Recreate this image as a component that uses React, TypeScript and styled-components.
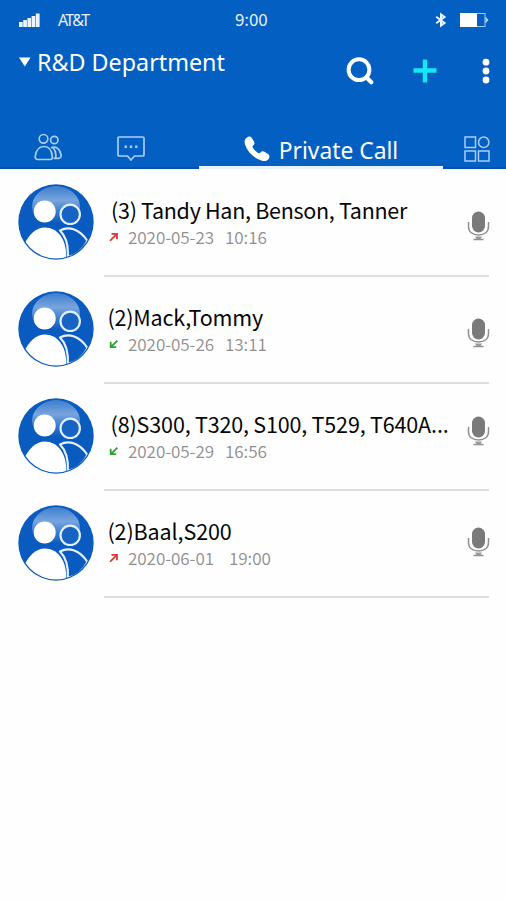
import React from "react";
import styled, { createGlobalStyle } from "styled-components";

const Global = createGlobalStyle`
  * { box-sizing: border-box; }
  body { margin: 0; background: #fefefe; }
`;

const cjk = `"Noto Sans CJK SC", "Noto Sans", sans-serif`;
const latin = `"Noto Sans", "Open Sans", sans-serif`;

const Screen = styled.div`
  width: 506px;
  height: 900px;
  background: #fefefe;
  overflow: hidden;
  font-family: ${cjk};
`;

const Header = styled.header`
  height: 169px;
  background: #035fc1;
  color: #fff;
  display: flex;
  flex-direction: column;
`;

const StatusBar = styled.div`
  height: 40px;
  padding: 0 17px 0 19px;
  display: grid;
  grid-template-columns: 216px auto 1fr;
  align-items: center;
`;

const StatusGroup = styled.div<{ $end?: boolean }>`
  display: flex;
  align-items: center;
  gap: ${(p) => (p.$end ? 12 : 17)}px;
  justify-content: ${(p) => (p.$end ? "flex-end" : "flex-start")};
`;

const Carrier = styled.span`
  font: 16px/20px ${latin};
  letter-spacing: -1.75px;
  color: #e6f1fd;
`;

const Clock = styled.time`
  margin-top: -2px;
  font: 17px/20px ${cjk};
  letter-spacing: -0.1px;
  color: #e6f1fd;
`;

const TitleBar = styled.div`
  height: 60px;
  padding: 0 16px 0 19px;
  display: flex;
  align-items: flex-start;
  justify-content: space-between;
`;

const Department = styled.h1`
  margin: 6px 0 0;
  display: flex;
  align-items: center;
  gap: 6px;
  font: 400 23.3px/32px ${latin};
  white-space: nowrap;
`;

const Actions = styled.div`
  display: flex;
  align-items: center;
  margin-top: 15px;
  height: 32px;
`;

const Action = styled.button<{ $gap?: number }>`
  padding: 0;
  border: 0;
  background: none;
  color: inherit;
  display: flex;
  margin-left: ${(p) => p.$gap ?? 0}px;
`;

const Tabs = styled.nav`
  flex: 1;
  display: grid;
  grid-template-columns: 96px 103px 244px 63px;
`;

const Tab = styled.div<{ $active?: boolean; $top: number; $pad?: number; $start?: boolean }>`
  display: flex;
  align-items: center;
  justify-content: ${(p) => (p.$start ? "flex-start" : "center")};
  gap: 9px;
  padding: ${(p) => p.$top}px 0 0 ${(p) => p.$pad ?? 0}px;
  border-bottom: ${(p) => (p.$active ? "3px solid #e9f1fc" : "2px solid #0350b2")};
  color: ${(p) => (p.$active ? "#fff" : "#a9cdf8")};
  font: 22.8px/32px ${latin};
  white-space: nowrap;
`;

const TabLabel = styled.span`
  padding-top: 4px;
  line-height: 28px;
`;

const List = styled.ul`
  list-style: none;
  margin: 1px 0 0;
  padding: 0;
`;

const Row = styled.li`
  height: 107px;
  padding: 0 17px 0 18px;
  display: flex;
`;

const AvatarBox = styled.div`
  width: 76px;
  margin: 14px 10px 0 0;
`;

const Details = styled.div`
  flex: 1;
  min-width: 0;
  display: flex;
  justify-content: space-between;
  border-bottom: 2px solid #dedede;
`;

const Name = styled.div<{ $indent: number; $spacing: number; $word: number }>`
  margin-top: 23px;
  padding-left: ${(p) => p.$indent}px;
  font: 400 21.5px/34px ${cjk};
  letter-spacing: ${(p) => p.$spacing}px;
  word-spacing: ${(p) => p.$word}px;
  color: #060606;
  white-space: nowrap;
`;

const Meta = styled.div<{ $gap: number }>`
  display: flex;
  align-items: center;
  padding-left: 5px;
  height: 19px;
  font: 350 17.1px/19px ${cjk};
  color: #909090;
  white-space: nowrap;
  time + time { margin-left: ${(p) => p.$gap}px; }
`;

const Stamp = styled.time<{ $lead?: boolean }>`
  margin: -1px 0 0 ${(p) => (p.$lead ? 10 : 0)}px;
  letter-spacing: -0.08px;
`;

const MicBox = styled.div<{ $top: number }>`
  margin: ${(p) => p.$top}px -1px 0 0;
  flex: none;
`;

const Signal = () => (
  <svg width="22" height="15" viewBox="0 0 22 15" fill="#eaf5ff">
    <rect x="0" y="9" width="3.7" height="5" />
    <rect x="4.2" y="7" width="3.7" height="7" />
    <rect x="8.4" y="5" width="3.7" height="9" />
    <rect x="12.6" y="3" width="3.7" height="11" />
    <rect x="16.8" y="0.5" width="3.8" height="13.5" />
  </svg>
);

const Bluetooth = () => (
  <svg width="12" height="16" viewBox="0 0 12 16" fill="none" stroke="#eaf5ff" strokeWidth="2">
    <path d="M1.2 4.7 9.5 11 6 13.5v-11L9.5 5l-8.3 6.3" />
  </svg>
);

const Battery = () => (
  <svg width="30" height="16" viewBox="0 0 30 16" fill="none">
    <rect x="1.5" y="1.5" width="24.5" height="13" stroke="#9cc8f5" />
    <rect x="1" y="1" width="17" height="14" fill="#fff" />
    <path d="M26.5 4.5 29.5 8l-3 3.5z" fill="#b5d5f8" />
  </svg>
);

const Caret = () => (
  <svg width="12" height="10" viewBox="0 0 12 10">
    <path d="M0 .5h11.5L5.8 9.5z" fill="#fff" />
  </svg>
);

const Search = () => (
  <svg width="28" height="28" viewBox="0 0 28 28" fill="none" stroke="#fff" strokeLinecap="round">
    <circle cx="13" cy="12.7" r="10.4" strokeWidth="4" />
    <path d="m20.5 20.5 4.8 4.8" strokeWidth="4.2" />
  </svg>
);

const Plus = () => (
  <svg width="24" height="24" viewBox="0 0 24 24" stroke="#12e9f5" strokeWidth="4.4">
    <path d="M12 .5v23M.5 11.5h23" />
  </svg>
);

const Dots = () => (
  <svg width="8" height="26" viewBox="0 0 8 26" fill="#fff">
    <circle cx="4" cy="4.2" r="3.4" />
    <circle cx="4" cy="13" r="3.4" />
    <circle cx="4" cy="22" r="3.4" />
  </svg>
);

const People = () => (
  <svg width="28" height="28" viewBox="0 0 28 28" fill="none" stroke="currentColor" strokeWidth="1.7">
    <circle cx="9.5" cy="5.8" r="4.3" />
    <circle cx="20.3" cy="7" r="3.7" />
    <path d="M4 26.5h12c1.8 0 2.5-1 2.3-3-.5-6.5-3.5-10-8.3-10s-8 3.5-8.8 10c-.2 2 1 3 2.8 3z" />
    <path d="M17 14.8c5-2 9.2 1.2 10 7.2.3 2.3-.6 3.3-2.8 3.3h-4.7M19 14.5c2.6 3 3.4 6.5 2.6 10.5" />
  </svg>
);

const Chat = () => (
  <svg width="28" height="26" viewBox="0 0 28 26" fill="none" stroke="currentColor" strokeWidth="1.7">
    <path d="M2 1h24q1 0 1 1v17q0 1-1 1h-8.5L14 24l-3.5-4H2q-1 0-1-1V2q0-1 1-1z" strokeLinejoin="round" />
    <path d="M7.5 10.8h2.4M12.8 10.8h2.4M18.1 10.8h2.4" strokeWidth="2.4" />
  </svg>
);

const Phone = () => (
  <svg width="26" height="26" viewBox="0 0 26 26" fill="#fff">
    <path d="M3.3 1.2C5 .2 6.9.4 8 2.2l2 3.4c.9 1.7.6 2.9-.8 4-.9.7-.9 1.4-.3 2.2 1.4 2.1 3 3.7 5.2 5.2.9.6 1.600.5 2.300-.4 1.100-1.400 2.400-1.700 4-.8l3.600 2.200c1.600 1 1.900 2.900.9 4.500-1.600 2.600-4.300 3.200-7.500 2.100C9.400 21.800 3.400 15.800 1 8.500.1 5.400.8 2.700 3.300 1.200z" />
  </svg>
);

const Grid = () => (
  <svg width="26" height="26" viewBox="0 0 26 26" fill="none" stroke="currentColor" strokeWidth="1.5">
    <rect x="1" y="1" width="10.5" height="10.5" />
    <circle cx="19.7" cy="6.3" r="5.2" />
    <rect x="1" y="15" width="10.5" height="10" />
    <rect x="14.5" y="15" width="10.5" height="10" />
  </svg>
);

const Avatar = () => (
  <svg width="76" height="76" viewBox="0 0 76 76">
    <defs>
      <linearGradient id="gloss" x1="0" y1="0" x2="0" y2="1">
        <stop offset="0" stopColor="#3d7dcd" />
        <stop offset="0.4" stopColor="#78a5de" />
        <stop offset="0.75" stopColor="#3377cc" />
        <stop offset="1" stopColor="#0f5ec1" />
      </linearGradient>
      <clipPath id="disc"><circle cx="38" cy="38" r="36.5" /></clipPath>
    </defs>
    <circle cx="38" cy="38" r="37.7" fill="#0a5bc0" />
    <g clipPath="url(#disc)">
      <path d="M14 23C14 11 26 2 38 2s24 9 24 21c0 9-10 15-24 15s-24-6-24-15z" fill="url(#gloss)" />
      <circle cx="26.7" cy="27.5" r="11" fill="#fff" />
      <circle cx="52.2" cy="30.3" r="9.7" fill="#1763c3" stroke="#e2eefc" strokeWidth="2.2" />
      <path d="M6 61C11 50 18 43.5 27 43.5c13 0 22.5 13 21 32H6z" fill="#fff" />
      <path d="M42 46.5c8-4.5 19-2.5 27.5 10.5C65.5 65 58.5 71 49.8 73c.7-11-1.8-20.5-7.8-26.5z" fill="#0a5bc0" stroke="#e6f0fd" strokeWidth="2.2" strokeLinejoin="round" />
    </g>
  </svg>
);

const Mic = () => (
  <svg width="23" height="30" viewBox="0 0 23 30" fill="none" stroke="#909090">
    <rect x="5" y="0.5" width="13" height="21" rx="6.5" fill="#7a7a7a" stroke="none" />
    <path d="M1.5 11v4.5c0 5.3 4 8.5 10 8.5s10-3.2 10-8.5V11" strokeWidth="1.5" />
    <path d="M8 25.5h7l-1.5 2.5h-4z" fill="#999" stroke="none" />
    <path d="M6.5 28.5h10" strokeWidth="1.5" />
  </svg>
);

const Arrow = ({ outgoing }: { outgoing: boolean }) => (
  <svg width="9" height="9" viewBox="0 0 9 9" fill="none" stroke={outgoing ? "#dc3b32" : "#2ea32e"} strokeWidth="1.8">
    {outgoing ? <path d="M1 8.8 7.7 2.1M2.5 1.8h5.5v5.5" /> : <path d="M8.4 1.6 2 8M1.7 2.8v5.4h5.5" />}
  </svg>
);

const calls = [
  { name: "(3) Tandy Han, Benson, Tanner", date: "2020-05-23", time: "10:16", outgoing: true, indent: 7, spacing: -0.28, word: -0.1, gap: 11, mic: 41 },
  { name: "(2)Mack,Tommy", date: "2020-05-26", time: "13:11", outgoing: false, indent: 3.4, spacing: -0.2, word: 0, gap: 11, mic: 41 },
  { name: "(8)S300, T320, S100, T529, T640A...", date: "2020-05-29", time: "16:56", outgoing: false, indent: 6.5, spacing: -0.12, word: -0.4, gap: 11, mic: 32 },
  { name: "(2)Baal,S200", date: "2020-06-01", time: "19:00", outgoing: true, indent: 3.4, spacing: -0.1, word: 0, gap: 15, mic: 36 },
];

export default function App() {
  return (
    <Screen>
      <Global />
      <Header>
        <StatusBar>
          <StatusGroup>
            <Signal />
            <Carrier>AT&amp;T</Carrier>
          </StatusGroup>
          <Clock>9:00</Clock>
          <StatusGroup $end>
            <Bluetooth />
            <Battery />
          </StatusGroup>
        </StatusBar>
        <TitleBar>
          <Department><Caret />R&amp;D Department</Department>
          <Actions>
            <Action aria-label="Search"><Search /></Action>
            <Action aria-label="Add" $gap={39}><Plus /></Action>
            <Action aria-label="More" $gap={45}><Dots /></Action>
          </Actions>
        </TitleBar>
        <Tabs>
          <Tab $top={26}><People /></Tab>
          <Tab $start $top={30} $pad={21}><Chat /></Tab>
          <Tab $active $top={32}><Phone /><TabLabel>Private Call</TabLabel></Tab>
          <Tab $pad={5} $top={30}><Grid /></Tab>
        </Tabs>
      </Header>
      <List>
        {calls.map((c) => (
          <Row key={c.name}>
            <AvatarBox><Avatar /></AvatarBox>
            <Details>
              <div>
                <Name $indent={c.indent} $spacing={c.spacing} $word={c.word}>{c.name}</Name>
                <Meta $gap={c.gap}>
                  <Arrow outgoing={c.outgoing} />
                  <Stamp $lead>{c.date}</Stamp>
                  <Stamp>{c.time}</Stamp>
                </Meta>
              </div>
              <MicBox $top={c.mic}><Mic /></MicBox>
            </Details>
          </Row>
        ))}
      </List>
    </Screen>
  );
}
